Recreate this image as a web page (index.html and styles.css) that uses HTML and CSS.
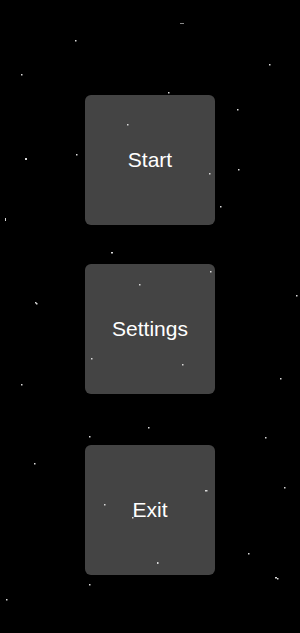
FILE: index.html
```html
<!DOCTYPE html>
<html lang="en">
<head>
  <meta charset="UTF-8" />
  <meta name="viewport" content="width=device-width, initial-scale=1.0"/>
  <title>Menu</title>
  <link rel="stylesheet" href="styles.css">
</head>
<body>
  <div class="menu">
    <button class="menu-button btn-start">Start</button>
    <button class="menu-button btn-settings">Settings</button>
    <button class="menu-button btn-exit">Exit</button>
  </div>

  <svg class="stars" width="300" height="633" viewBox="0 0 300 633">
    <rect x="180" y="23" width="4" height="1" fill="#888"/>
    <rect x="75" y="40" width="1.5" height="1.5"/>
    <rect x="269" y="64" width="1.5" height="1.5"/>
    <rect x="21" y="74" width="1.5" height="1.5"/>
    <rect x="168" y="92" width="1.5" height="1.5"/>
    <rect x="237" y="109" width="1.5" height="1.5"/>
    <rect x="127" y="124" width="1.5" height="1.5"/>
    <rect x="76" y="154" width="1.5" height="1.5"/>
    <rect x="25" y="158" width="2" height="2"/>
    <rect x="238" y="169" width="1.5" height="1.5"/>
    <rect x="209" y="173" width="1.5" height="1.5"/>
    <rect x="220" y="206" width="1.5" height="1.5"/>
    <rect x="5" y="218" width="1" height="3"/>
    <rect x="111" y="252" width="2" height="1.5"/>
    <rect x="210" y="271" width="1.5" height="1.5"/>
    <rect x="139" y="284" width="1.5" height="1.5"/>
    <rect x="296" y="295" width="1.5" height="1.5"/>
    <rect x="35" y="302" width="1.5" height="1.5"/>
    <rect x="36" y="303" width="1.5" height="1.5"/>
    <rect x="91" y="358" width="1.5" height="1.5"/>
    <rect x="182" y="364" width="1.5" height="1.5"/>
    <rect x="280" y="378" width="1.5" height="1.5"/>
    <rect x="21" y="384" width="1.5" height="1.5"/>
    <rect x="148" y="427" width="1.5" height="1.5"/>
    <rect x="89" y="436" width="1.5" height="1.5"/>
    <rect x="265" y="437" width="1.5" height="1.5"/>
    <rect x="34" y="463" width="1.5" height="1.5"/>
    <rect x="284" y="487" width="1.5" height="1.5"/>
    <rect x="205" y="490" width="2.5" height="1.5"/>
    <rect x="104" y="504" width="1.5" height="1.5"/>
    <rect x="132" y="517" width="1.5" height="1.5"/>
    <rect x="248" y="553" width="1.5" height="1.5"/>
    <rect x="157" y="562" width="1.5" height="2"/>
    <rect x="275" y="577" width="2" height="1.5"/>
    <rect x="277" y="578" width="1.5" height="1.5"/>
    <rect x="89" y="584" width="1.5" height="1.5"/>
    <rect x="6" y="599" width="1.5" height="1.5"/>
  </svg>
</body>
</html>
```

FILE: styles.css
```css
body {
  margin: 0;
  padding: 0;
  background-color: #000;
  font-family: 'Liberation Sans', Arial, sans-serif;
  min-height: 100vh;
  overflow: hidden;
  position: relative;
}

.menu {
  display: flex;
  flex-direction: column;
  align-items: center;
  padding-top: 95px;
}

.menu-button {
  width: 130px;
  height: 130px;
  background-color: #444;
  color: #fff;
  border: none;
  border-radius: 6px;
  font-family: inherit;
  font-size: 21px;
  padding: 0;
  cursor: pointer;
}

.btn-start {
  margin-bottom: 39px;
}

.btn-settings {
  margin-bottom: 51px;
}

.stars {
  position: absolute;
  top: 0;
  left: 0;
  pointer-events: none;
  fill: #d8d8d8;
}
```
